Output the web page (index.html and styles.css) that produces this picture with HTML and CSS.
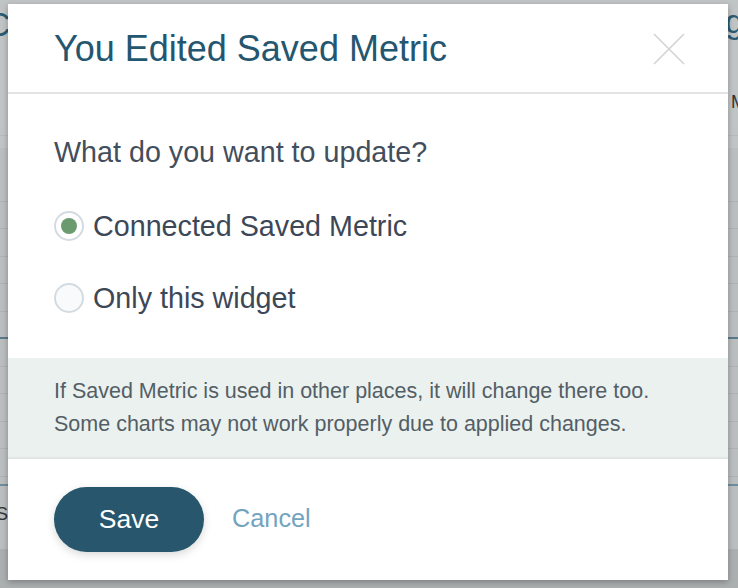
FILE: index.html
```html
<!DOCTYPE html>
<html>
<head>
<meta charset="utf-8">
<link rel="stylesheet" href="styles.css">
</head>
<body>
<div class="page">
  <div class="page-top">
    <div class="page-head">
      <span class="page-title-left">C</span>
      <span class="page-title-right">g</span>
    </div>
    <div class="page-sub">
      <span class="page-sub-right">M</span>
    </div>
  </div>
  <div class="page-table">
    <div class="trow"></div>
    <div class="trow"></div>
    <div class="trow"></div>
    <div class="trow"></div>
    <div class="trow"></div>
    <div class="trow blue"></div>
    <div class="trow"></div>
    <div class="trow"></div>
    <div class="trow"></div>
    <div class="trow"></div>
    <div class="trow"></div>
    <div class="tfoot"><span class="tfoot-s">S</span></div>
  </div>
  <div class="page-bottom"></div>
</div>

<div class="modal">
  <div class="modal-header">
    <h1 class="modal-title">You Edited Saved Metric</h1>
    <button class="close" aria-label="Close">
      <svg width="32" height="32" viewBox="0 0 32 32"><path d="M1 1 L31 31 M31 1 L1 31" stroke="#d3d3d3" stroke-width="1.6" fill="none"/></svg>
    </button>
  </div>
  <div class="modal-body">
    <p class="question">What do you want to update?</p>
    <div class="options">
      <label class="option"><span class="radio checked"><span class="dot"></span></span><span class="option-text">Connected Saved Metric</span></label>
      <label class="option"><span class="radio"></span><span class="option-text">Only this widget</span></label>
    </div>
  </div>
  <div class="info">
    <p>If Saved Metric is used in other places, it will change there too.</p>
    <p>Some charts may not work properly due to applied changes.</p>
  </div>
  <div class="modal-footer">
    <button class="btn-save">Save</button>
    <button class="btn-cancel">Cancel</button>
  </div>
</div>
</body>
</html>
```

FILE: styles.css
```css
* { box-sizing: border-box; }
html, body { margin: 0; padding: 0; }
body {
  width: 738px;
  height: 588px;
  overflow: hidden;
  background: #c0c3c4;
  font-family: "Liberation Sans", Arial, Helvetica, sans-serif;
}
.page {
  display: flex;
  flex-direction: column;
  height: 588px;
}
.page-top {
  height: 148px;
  background: #c1c4c5;
  display: flex;
  flex-direction: column;
}
.page-head {
  height: 60px;
  display: flex;
  justify-content: space-between;
  align-items: center;
  font-size: 34px;
  color: #2a5a72;
}
.page-title-left { margin-left: -14px; margin-top: -12px; }
.page-title-right { margin-right: -6px; margin-top: -18px; }
.page-sub {
  height: 76px;
  display: flex;
  justify-content: flex-end;
  align-items: center;
  font-size: 18px;
  color: #333;
  border-bottom: 1px solid #b6babb;
}
.page-sub-right { margin-right: -8px; margin-top: 10px; }
.page-table {
  display: flex;
  flex-direction: column;
  background: #babebf;
  padding-top: 26px;
}
.trow {
  height: 27.5px;
  border-bottom: 1px solid #aeb2b3;
}
.trow.blue { border-bottom: 2px solid #5a7a8a; }
.tfoot {
  margin-top: 7px;
  height: 65px;
  border-top: 2px solid #6e8d9c;
  display: flex;
  align-items: flex-start;
  padding-top: 18px;
  font-size: 18px;
  color: #333;
}
.tfoot-s { margin-left: -4px; }
.page-bottom {
  flex: 1;
  background: #abafb0;
}

.modal {
  position: absolute;
  left: 8px;
  top: 4px;
  width: 720px;
  height: 576px;
  background: #fff;
  box-shadow: 0 2px 6px rgba(0, 0, 0, 0.28);
  display: flex;
  flex-direction: column;
}
.modal-header {
  height: 90px;
  border-bottom: 2px solid #e3e3e3;
  display: flex;
  align-items: center;
  justify-content: space-between;
  padding: 0 43px 0 46px;
}
.modal-title {
  margin: 2px 0 0;
  font-size: 36px;
  font-weight: normal;
  color: #25566f;
}
.close {
  border: 0;
  background: none;
  padding: 0;
  width: 32px;
  height: 32px;
  margin-top: 2px;
}
.close svg { display: block; }
.modal-body {
  padding: 41px 46px 40px;
}
.question {
  margin: 0;
  font-size: 28.7px;
  line-height: 34px;
  color: #434e5c;
}
.options {
  margin-top: 37px;
  display: flex;
  flex-direction: column;
  gap: 32px;
}
.option {
  height: 40px;
  display: flex;
  align-items: center;
  gap: 9px;
}
.radio {
  width: 30px;
  height: 30px;
  border-radius: 50%;
  border: 2px solid #d3dbe1;
  background: #f8fafb;
  display: flex;
  align-items: center;
  justify-content: center;
}
.radio.checked { background: #fff; }
.dot {
  width: 16px;
  height: 16px;
  border-radius: 50%;
  background: #6b9a6f;
}
.option-text {
  font-size: 28.7px;
  color: #3c4757;
}
.info {
  background: #ebf1ee;
  border-bottom: 2px solid #e1e5e3;
  padding: 17px 46px 16px;
  height: 101px;
}
.info p {
  margin: 0;
  font-size: 21.5px;
  line-height: 33px;
  color: #535e66;
}
.modal-footer {
  padding: 28px 46px 0;
  display: flex;
  align-items: center;
  gap: 28px;
}
.btn-save {
  width: 150px;
  height: 65px;
  border: 0;
  border-radius: 33px;
  background: #27566d;
  color: #fff;
  font-family: "Liberation Sans", Arial, sans-serif;
  font-size: 26.5px;
  box-shadow: 0 3px 8px rgba(0, 0, 0, 0.15);
}
.btn-cancel {
  border: 0;
  background: none;
  padding: 0;
  font-family: "Liberation Sans", Arial, sans-serif;
  font-size: 25.3px;
  color: #73a4bf;
  margin-top: -3px;
}
```
